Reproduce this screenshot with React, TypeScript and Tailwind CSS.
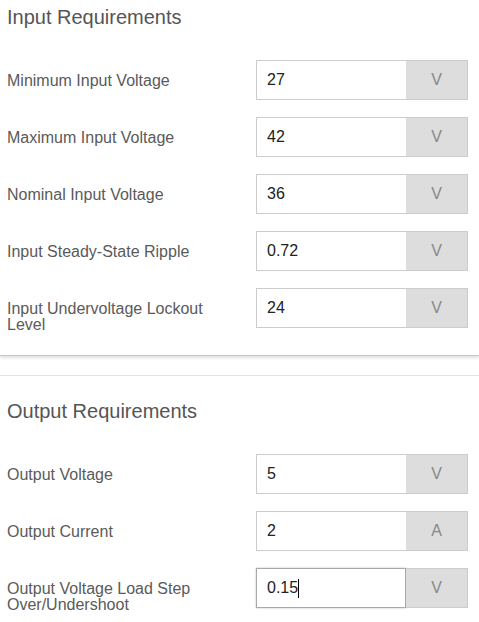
import React from "react";

type Row = { label: string; value: string; unit: string; focused?: boolean };

const inputRows: Row[] = [
  { label: "Minimum Input Voltage", value: "27", unit: "V" },
  { label: "Maximum Input Voltage", value: "42", unit: "V" },
  { label: "Nominal Input Voltage", value: "36", unit: "V" },
  { label: "Input Steady-State Ripple", value: "0.72", unit: "V" },
  { label: "Input Undervoltage Lockout Level", value: "24", unit: "V" },
];

const outputRows: Row[] = [
  { label: "Output Voltage", value: "5", unit: "V" },
  { label: "Output Current", value: "2", unit: "A" },
  { label: "Output Voltage Load Step Over/Undershoot", value: "0.15", unit: "V", focused: true },
];

function FieldRow({ row }: { row: Row }) {
  return (
    <div className="flex items-start h-[40px]">
      <div className="w-[249px] pr-[14px] pt-[13px] text-[16px] leading-[16px] text-[#5a5a5a]">{row.label}</div>
      <div className="flex h-[40px] w-[212px]">
        <div
          className={
            row.focused
              ? "flex items-center w-[150px] h-full bg-white border border-[#a9a9a9] shadow-[0_0_2px_rgba(0,0,0,0.25)] pl-[10px] text-[16px] text-[#222]"
              : "flex items-center w-[150px] h-full bg-white border border-[#ccc] border-r-0 pl-[10px] text-[16px] text-[#222]"
          }
        >
          <span>{row.value}</span>
          {row.focused && <span className="inline-block w-px h-[19px] bg-black" />}
        </div>
        <div className="flex items-center justify-center w-[62px] h-full bg-[#dddddd] border border-[#cccccc] border-l-0 text-[16px] text-[#888]">
          {row.unit}
        </div>
      </div>
    </div>
  );
}

export default function App() {
  return (
    <div
      className="w-[479px] h-[622px] overflow-hidden bg-white"
      style={{ fontFamily: '"Liberation Sans", Arial, sans-serif' }}
    >
      <div className="pl-[7px] pt-[6px] pb-[27px] border-b border-[#c4c4c4] shadow-[0_2px_3px_rgba(0,0,0,0.12)] relative">
        <div className="text-[20px] leading-[22px] text-[#555]">Input Requirements</div>
        <div className="mt-[32px] flex flex-col gap-[17px]">
          {inputRows.map((r) => (
            <FieldRow key={r.label} row={r} />
          ))}
        </div>
      </div>
      <div className="h-[19px]" />
      <div className="border-t border-[#e3e3e3] pl-[7px] pt-[24px]">
        <div className="text-[20px] leading-[22px] text-[#555]">Output Requirements</div>
        <div className="mt-[32px] flex flex-col gap-[17px]">
          {outputRows.map((r) => (
            <FieldRow key={r.label} row={r} />
          ))}
        </div>
      </div>
    </div>
  );
}
